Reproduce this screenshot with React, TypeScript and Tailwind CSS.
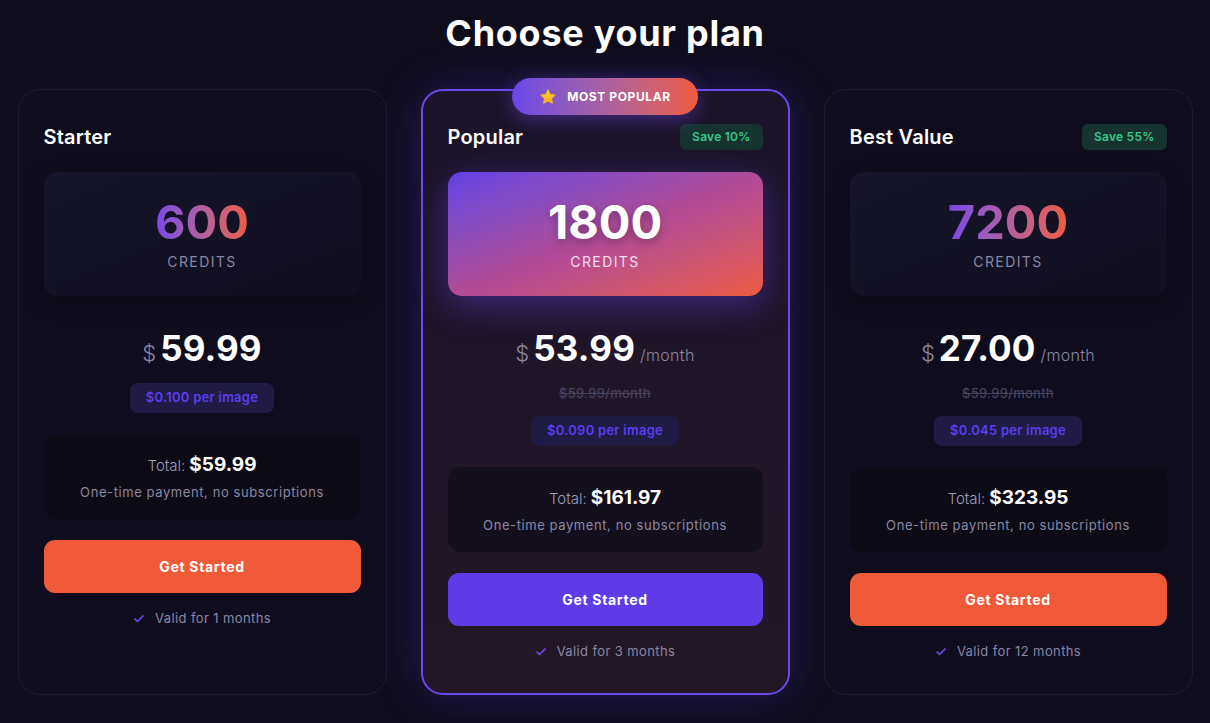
import React from 'react';
import { Check } from 'lucide-react';

interface Plan {
  name: string;
  credits: string;
  price: string;
  perMonth: boolean;
  original?: string;
  perImage: string;
  total: string;
  valid: string;
  save?: string;
  popular?: boolean;
}

const plans: Plan[] = [
  { name: 'Starter', credits: '600', price: '59.99', perMonth: false, perImage: '$0.100 per image', total: '$59.99', valid: 'Valid for 1 months' },
  { name: 'Popular', credits: '1800', price: '53.99', perMonth: true, original: '$59.99/month', perImage: '$0.090 per image', total: '$161.97', valid: 'Valid for 3 months', save: 'Save 10%', popular: true },
  { name: 'Best Value', credits: '7200', price: '27.00', perMonth: true, original: '$59.99/month', perImage: '$0.045 per image', total: '$323.95', valid: 'Valid for 12 months', save: 'Save 55%' },
];

const Star = () => (
  <svg width="18" height="18" viewBox="0 0 24 24">
    <defs>
      <linearGradient id="starFill" x1="0" y1="0" x2="0" y2="1">
        <stop offset="0%" stopColor="#ffd84a" />
        <stop offset="100%" stopColor="#f2a515" />
      </linearGradient>
    </defs>
    <path
      d="M12 2.5l2.9 5.9 6.5.9-4.7 4.6 1.1 6.5L12 17.3l-5.8 3.1 1.1-6.5-4.7-4.6 6.5-.9z"
      fill="url(#starFill)"
      stroke="#f2b21f"
      strokeWidth="1.5"
      strokeLinejoin="round"
    />
  </svg>
);

const PlanCard = ({ plan }: { plan: Plan }) => {
  const pop = plan.popular;
  return (
    <div
      className={`relative w-[369px] rounded-[22px] px-[25px] flex flex-col ${
        pop
          ? 'border-2 border-[#6b48f0] pt-[33px] pb-[31px] bg-gradient-to-b from-[#1c1429] to-[#231726] shadow-[0_0_45px_rgba(98,64,240,0.28)]'
          : 'border border-[#1e1b31] pt-[34px] pb-[32px] bg-[#0f0d1d]'
      }`}
    >
      {pop && (
        <div className="absolute left-1/2 -translate-x-1/2 -top-[13px] h-[37px] w-[186px] rounded-full bg-gradient-to-r from-[#6a45e8] to-[#ee5a3a] flex items-center justify-center gap-[10px] shadow-[0_4px_18px_rgba(110,70,240,0.45)]">
          <Star />
          <span className="text-[12px] font-bold tracking-[0.05em] text-white">MOST POPULAR</span>
        </div>
      )}

      <div className="h-[26px] flex items-center justify-between">
        <h3 className="text-[20px] font-semibold tracking-[0.01em] text-white">{plan.name}</h3>
        {plan.save && (
          <span className="h-[26px] px-[12px] rounded-md bg-[#16332f] text-[#34c98a] text-[12px] font-semibold tracking-[0.02em] flex items-center">
            {plan.save}
          </span>
        )}
      </div>

      <div
        className={`mt-[22px] h-[124px] rounded-[14px] flex flex-col items-center justify-center ${
          pop
            ? 'bg-gradient-to-br from-[#6340e6] via-[#b04a98] to-[#ee5a3a] shadow-[0_10px_34px_rgba(100,60,230,0.45)]'
            : 'bg-gradient-to-br from-[#161429] to-[#100e1f] shadow-[0_6px_20px_rgba(0,0,0,0.35)]'
        }`}
      >
        {pop ? (
          <span className="text-[47px] leading-[52px] font-bold text-white [text-shadow:0_4px_10px_rgba(0,0,0,0.3)]">
            {plan.credits}
          </span>
        ) : (
          <span className="text-[47px] leading-[52px] font-bold bg-gradient-to-r from-[#7a45e6] to-[#ee5a3a] bg-clip-text text-transparent">
            {plan.credits}
          </span>
        )}
        <span className={`mt-[3px] text-[14px] tracking-[0.1em] ${pop ? 'text-[#f3dff0]' : 'text-[#8a87a3]'}`}>
          CREDITS
        </span>
      </div>

      <div className="mt-[30px] h-[44px] leading-[44px] flex items-baseline justify-center">
        <span className="text-[22px] font-light text-[#8a87a3] mr-[4px]">$</span>
        <span className="text-[35px] font-bold text-white tracking-[0.005em]">{plan.price}</span>
        {plan.perMonth && <span className="ml-[5px] text-[16px] font-light tracking-[0.02em] text-[#8a87a3]">/month</span>}
      </div>

      {plan.original && (
        <div className="mt-[14px] h-[20px] flex items-center justify-center text-[13px] font-medium tracking-[0.02em] text-[#45425b] line-through">
          {plan.original}
        </div>
      )}

      <div className={`${plan.original ? 'mt-[12px]' : 'mt-[13px]'} flex justify-center`}>
        <span className="h-[30px] px-[16px] rounded-lg bg-[#201b44] text-[#5a3ef0] text-[13px] font-semibold tracking-[0.02em] flex items-center">
          {plan.perImage}
        </span>
      </div>

      <div
        className={`mt-[21px] h-[85px] rounded-[12px] flex flex-col items-center justify-center ${
          pop ? 'bg-[#140f1d]' : 'bg-[#0b0a15]'
        }`}
      >
        <div className="flex items-baseline">
          <span className="text-[15px] font-light text-[#a09eb5] mr-[4px]">Total:</span>
          <span className="text-[19px] font-bold text-white">{plan.total}</span>
        </div>
        <span className="mt-[4px] text-[13px] tracking-[0.045em] text-[#8a87a3]">One-time payment, no subscriptions</span>
      </div>

      <button
        className={`mt-[21px] h-[53px] rounded-[11px] text-white text-[14px] font-bold tracking-[0.05em] ${
          pop ? 'bg-[#5f3be8]' : 'bg-[#f05a38]'
        }`}
      >
        Get Started
      </button>

      <div className="mt-[16px] h-[20px] flex items-center justify-center gap-[10px] text-[13px] tracking-[0.03em] text-[#8a87a3]">
        <Check size={12} strokeWidth={3.5} className="text-[#6b48f0]" />
        <span>{plan.valid}</span>
      </div>
    </div>
  );
};

export default function App() {
  return (
    <div className="min-h-[723px] w-full bg-[#0f0d1c] font-['Inter','Noto_Sans',sans-serif] pt-[13px] overflow-hidden">
      <h1 className="text-center text-[36px] leading-[40px] font-bold tracking-[0.02em] text-white">Choose your plan</h1>
      <div className="mt-[36px] flex justify-center gap-[34px] items-stretch">
        {plans.map((p) => (
          <PlanCard key={p.name} plan={p} />
        ))}
      </div>
    </div>
  );
}
